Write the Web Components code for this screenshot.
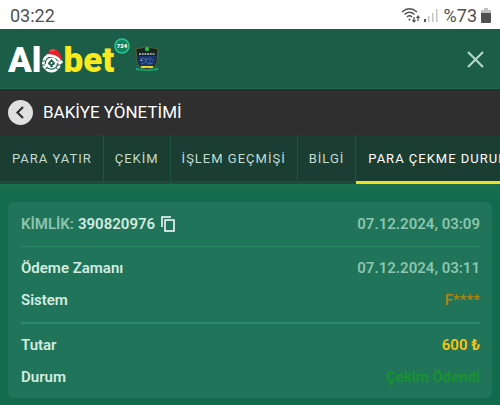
<!DOCTYPE html>
<html lang="tr">
<head>
<meta charset="utf-8">
<meta name="viewport" content="width=device-width, initial-scale=1">
<title>Bakiye Yönetimi</title>
<style>
  body {
    margin: 0;
    min-height: 100vh;
    overflow-x: hidden;
    background: #136b4e;
    font-family: Roboto, "Liberation Sans", sans-serif;
  }
  main {
    padding: 18px 8px 7px;
    background: linear-gradient(#18704f, #136b4e 12px);
  }
</style>
</head>
<body>
<status-bar time="03:22" battery="%73"></status-bar>
<site-header></site-header>
<page-title>BAKİYE YÖNETİMİ</page-title>
<tab-strip>
  <tab-item>PARA YATIR</tab-item>
  <tab-item>ÇEKİM</tab-item>
  <tab-item>İŞLEM GEÇMİŞİ</tab-item>
  <tab-item>BİLGİ</tab-item>
  <tab-item active>PARA ÇEKME DURUMU</tab-item>
</tab-strip>
<main>
  <payment-card>
    <payment-row>
      <copy-id slot="label" value="390820976">KİMLİK:</copy-id>
      07.12.2024, 03:09
    </payment-row>
    <row-divider></row-divider>
    <payment-row><span slot="label">Ödeme Zamanı</span>07.12.2024, 03:11</payment-row>
    <payment-row tone="system"><span slot="label">Sistem</span>F****</payment-row>
    <row-divider thick></row-divider>
    <payment-row tone="amount"><span slot="label">Tutar</span>600 ₺</payment-row>
    <payment-row tone="paid"><span slot="label">Durum</span>Çekim Ödendi</payment-row>
  </payment-card>
</main>

<script>
const define = (name, html, setup) => {
  const template = document.createElement('template');
  template.innerHTML = html;
  customElements.define(name, class extends HTMLElement {
    constructor() {
      super();
      this.attachShadow({ mode: 'open' });
      this.shadowRoot.appendChild(template.content.cloneNode(true));
      if (setup) setup(this, this.shadowRoot);
    }
  });
};

define('status-bar', `
<style>
  :host {
    display: flex;
    align-items: center;
    justify-content: space-between;
    height: 29px;
    padding: 2px 9px 0 10px;
    box-sizing: border-box;
    background: #fff;
    color: #505050;
    font-size: 18px;
    line-height: 27px;
  }
  .icons { display: flex; align-items: center; }
  .battery { margin: 0 4px 0 6px; }
  svg { display: block; }
</style>
<span class="time"></span>
<div class="icons">
  <svg width="20" height="18" viewBox="0 0 20 18" fill="none" stroke="#505050" stroke-width="1.400">
    <path d="M1 5Q8.500 -1.500 16 5M3.500 7.500Q8.500 3 13.500 7.500M6 10Q8.500 7.500 11 10"/>
    <circle cx="8.500" cy="12.500" r="1" fill="#505050" stroke="none"/>
    <path stroke-width="1.200" d="M13 10v5M11.500 13l1.500 2 1.500-2M17 14V9M15.500 11L17 9l1.500 2"/>
  </svg>
  <svg width="17" height="18" viewBox="0 0 17 18">
    <path fill="#505050" d="M3 12h2v3H3z"/>
    <path fill="#c4c4c4" d="M7 9h1.500v6H7zM11 6h1.500v9H11zM15 2h1.500v13H15z"/>
  </svg>
  <span class="battery"></span>
  <svg width="10" height="18" viewBox="0 0 10 18">
    <path fill="#c0c0c0" d="M3 1h4v2h2q1 0 1 1v3H0V4q0-1 1-1h2z"/>
    <path fill="#505050" d="M0 6h10v9q0 1-1 1H1q-1 0-1-1z"/>
  </svg>
</div>`, (host, root) => {
  root.querySelector('.time').textContent = host.getAttribute('time');
  root.querySelector('.battery').textContent = host.getAttribute('battery');
});

define('brand-logo', `
<style>
  :host { display: block; }
  a {
    display: flex;
    align-items: center;
    color: #fff;
    font: 900 35px/40px Roboto, "Open Sans", sans-serif;
    text-decoration: none;
  }
  span { padding-top: 4px; }
  .yellow { color: #f8ea1c; }
  svg { display: block; }
  .emblem { margin-top: 2px; }
  .badge { margin-bottom: 27px; }
  .crest { margin-left: 5px; }
</style>
<a href="#" aria-label="Alobet">
  <span>Al</span>
  <svg class="emblem" width="22" height="28" viewBox="0 0 22 28">
    <circle cx="10.500" cy="17" r="9.500" fill="#fff"/>
    <circle cx="10.500" cy="17" r="6.200" fill="none" stroke="#1b5d47" stroke-width="1.200" stroke-dasharray="15 3 18 3"/>
    <path d="M0 15h4M1 19h3M17 15h4M17 19h4M3 24l3-2M18 24l-3-2" stroke="#1b5d47"/>
    <path d="M10.500 13l3.500 4q0 2.500-2.500 2l.5 2H9l.5-2Q7 19.500 7 17z" fill="#1b5d47"/>
    <circle cx="10.500" cy="17" r="1" fill="#fff"/>
    <path d="M7 8Q8 2 14 3Q20 5 21 15l-3-3L7 9z" fill="#e3222b"/>
    <path d="M9 5q3-2 5 0" stroke="#ff6b65" fill="none"/>
    <path d="M6.500 9.500q7-.5 11.500 4" stroke="#fff" stroke-width="2.500" stroke-linecap="round" fill="none"/>
    <circle cx="20" cy="16" r="1.800" fill="#fff"/>
  </svg>
  <span class="yellow">bet</span>
  <svg class="badge" width="16" height="16" viewBox="0 0 16 16">
    <circle cx="8" cy="8" r="7" fill="#128260" stroke="#2cc790" stroke-width="1.500"/>
    <text x="8" y="10" text-anchor="middle" font-family="Roboto, sans-serif" font-size="6" font-weight="900" fill="#fff">724</text>
  </svg>
  <svg class="crest" width="24" height="26" viewBox="0 0 24 26">
    <path d="M1 2.500q6 0 11-2 5 2 11 2l-1 13q-1 6-10 8-9-2-10-8z" fill="#16231f" stroke="#716f3c" stroke-width=".7"/>
    <path d="M2.500 10h19l-1 6q-1 4-8.500 6-7.500-2-8.500-6z" fill="#17346d"/>
    <circle cx="12" cy="3" r="2.200" fill="#28b64a"/>
    <path d="M4 8h16" stroke="#b8c4bd" stroke-width="1.500" stroke-dasharray="2 .7"/>
    <path d="M5 13l3-1 3 2 4-2 4 3M6 18l5-2 3 2 4-1M11 12v4M15 14v4" stroke="#5878b9" stroke-width=".7" fill="none"/>
    <path d="M6 13l1 2-2-1h3l-2 1z" fill="#fff"/>
    <path d="M6 20h12v2H6z" fill="#e4d32c"/>
    <path d="M1 22q11 2 22 0v2q-11 2-22 0z" fill="#16aa6c"/>
    <path d="M4 23.500q8 1 16 0" stroke="#0b5c3c" stroke-width=".7" stroke-dasharray="1 .6" fill="none"/>
  </svg>
</a>`);

define('site-header', `
<style>
  :host {
    display: flex;
    align-items: center;
    justify-content: space-between;
    height: 60px;
    padding: 1px 16px 0 8px;
    box-sizing: border-box;
    background: #1b5d47;
    border-bottom: 1px solid #1e6a50;
  }
  button {
    padding: 0;
    border: 0;
    background: none;
    color: #b4d6c8;
  }
  svg { display: block; }
</style>
<brand-logo></brand-logo>
<button type="button" aria-label="Kapat">
  <svg width="17" height="17" viewBox="0 0 17 17" fill="none" stroke="currentColor" stroke-width="2.200">
    <path d="M1 1l15 15M16 1L1 16"/>
  </svg>
</button>`);

define('page-title', `
<style>
  :host {
    display: flex;
    align-items: center;
    gap: 10px;
    height: 46px;
    padding: 0 8px;
    background: #2f2f2f;
    color: #fff;
  }
  h1 { margin: 0; font-size: 17px; font-weight: 400; line-height: 24px; }
  button {
    display: grid;
    place-items: center;
    width: 25px;
    height: 25px;
    padding: 0;
    border: 0;
    border-radius: 50%;
    background: #e0e0e0;
    color: #2f2f2f;
  }
</style>
<button type="button" aria-label="Geri">
  <svg width="13" height="13" viewBox="0 0 13 13" fill="none" stroke="currentColor" stroke-width="2.200">
    <path d="M9 1L3.500 6.500 9 12"/>
  </svg>
</button>
<h1><slot></slot></h1>`);

define('tab-strip', `
<style>
  :host {
    display: flex;
    height: 49px;
    overflow: hidden;
    background: #1a3e31;
  }
</style>
<slot></slot>`);

define('tab-item', `
<style>
  :host { display: flex; flex: none; }
  button {
    padding: 2px 11px 0;
    border: 0;
    border-right: 1px solid #1c5541;
    border-bottom: 3px solid #22493a;
    background: none;
    color: #c4dcd1;
    font: 400 13px/20px Roboto, "Liberation Sans", sans-serif;
    letter-spacing: 1px;
    white-space: nowrap;
  }
  :host(:first-child) button { padding-left: 12px; }
  :host([active]) button { padding-left: 12px; color: #fff; border-bottom-color: #efe025; }
</style>
<button type="button"><slot></slot></button>`);

define('payment-card', `
<style>
  :host {
    display: block;
    padding: 6px 12px 5px 13px;
    border-radius: 6px;
    background: #1f7459;
  }
</style>
<slot></slot>`);

define('payment-row', `
<style>
  :host {
    display: flex;
    align-items: center;
    justify-content: space-between;
    height: 32px;
    color: #8dc4ae;
    font-size: 15px;
    font-weight: 600;
    line-height: 20px;
  }
  .label { color: #d3ece1; }
  :host([tone="system"]) .value { color: #aa8512; }
  :host([tone="amount"]) .value { color: #fbc414; }
  :host([tone="paid"]) .value { color: #18942f; }
</style>
<div class="label"><slot name="label"></slot></div>
<div class="value"><slot></slot></div>`);

define('row-divider', `
<style>
  :host { display: block; height: 1px; margin: 6px 0 5px; background: #2c8a69; }
  :host([thick]) { height: 2px; }
</style>`);

define('copy-id', `
<style>
  :host { display: flex; align-items: center; gap: 4px; }
  .name { color: #8dc4ae; }
  button { margin-left: 2px; padding: 0; border: 0; background: none; color: #fff; }
  svg { display: block; }
</style>
<span class="name"><slot></slot></span>
<span class="value"></span>
<button type="button" aria-label="Kopyala">
  <svg width="14" height="16" viewBox="0 0 14 16" fill="none" stroke="currentColor" stroke-width="1.500">
    <path d="M1 11V1h9M4 4h9v11H4z"/>
  </svg>
</button>`, (host, root) => {
  root.querySelector('.value').textContent = host.getAttribute('value');
});
</script>
</body>
</html>
